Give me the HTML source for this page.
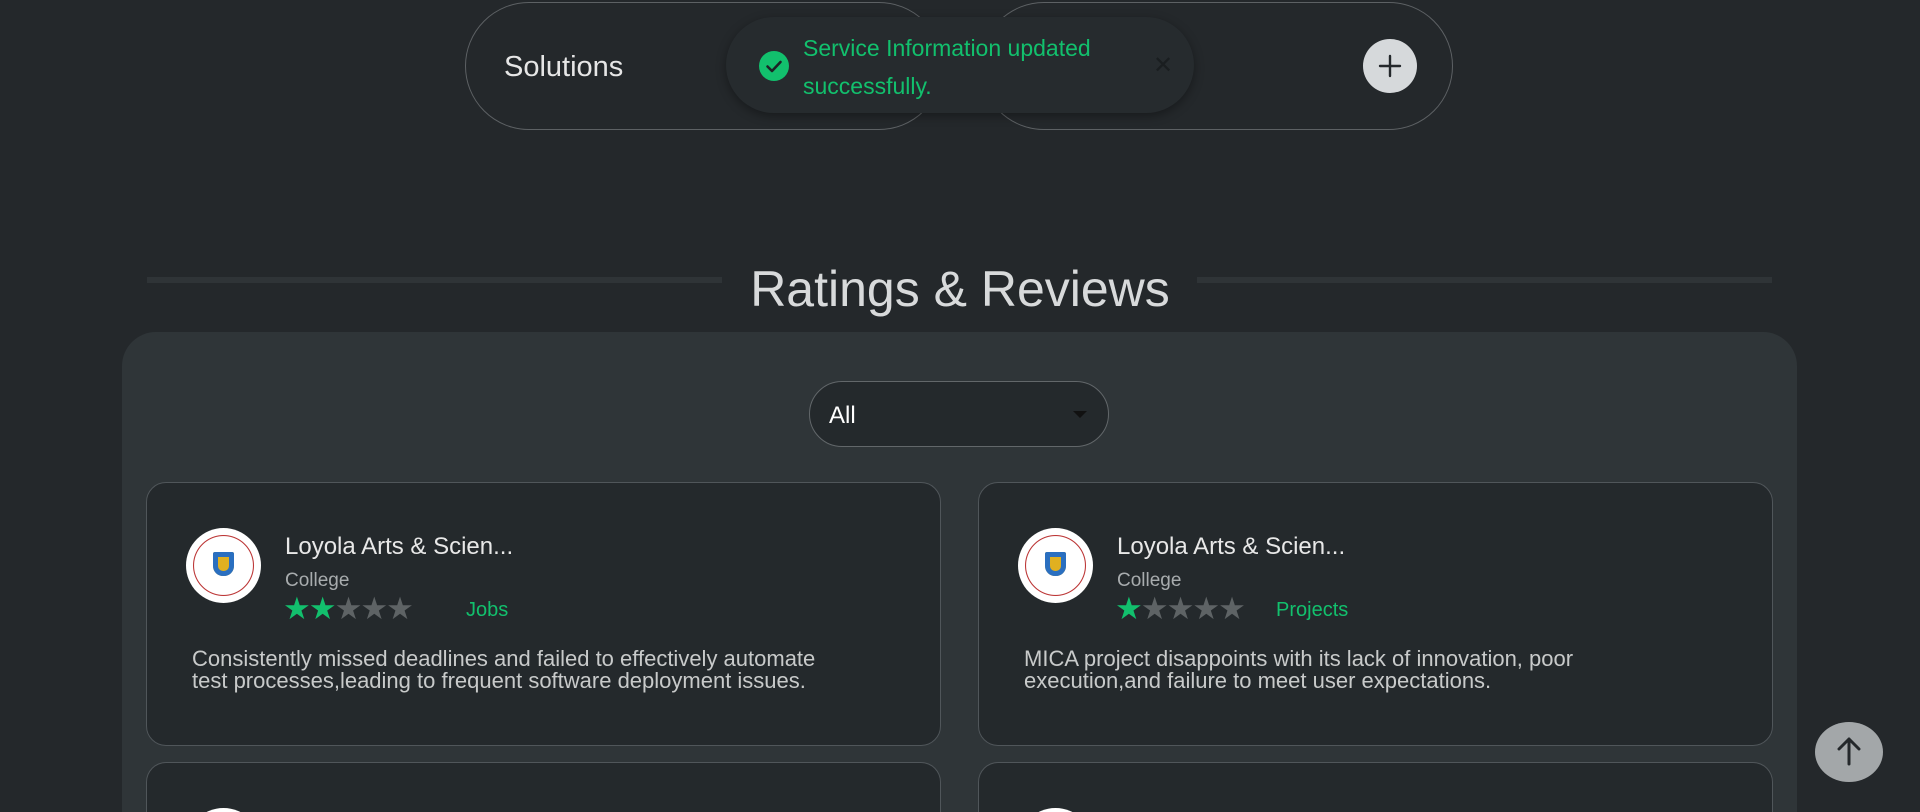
<!DOCTYPE html>
<html style="width:1920px;height:812px;overflow:hidden"><head><meta charset="utf-8"><style>
*{box-sizing:border-box;margin:0;padding:0}
body{width:1920px;height:812px;background:#24282b;font-family:"Liberation Sans",sans-serif;position:relative;overflow:hidden;color:#e6e6e6}
.abs{position:absolute}
.pill{position:absolute;top:2px;height:128px;border:1.5px solid #5d6164;border-radius:64px;background:#24282b}
.toast{position:absolute;left:726px;top:17px;width:468px;height:96px;border-radius:48px;background:#262b2e;box-shadow:0 3px 10px rgba(0,0,0,.35)}
.line{position:absolute;top:277px;height:6px;background:#2f3437}
.panel{position:absolute;left:122px;top:332px;width:1675px;height:480px;border-radius:34px 34px 0 0;background:#2f3538}
.card{position:absolute;width:795px;height:264px;border:1.5px solid #50565a;border-radius:20px;background:#24292c;overflow:hidden}
.logo{position:absolute;left:39px;top:45px;width:75px;height:75px;border-radius:50%;background:radial-gradient(circle,#fff 0 55%,#b33 56% 57%,#fff 58% 86%,#bbb 87% 100%)}
.logo:after{content:"";position:absolute;left:27px;top:24px;width:21px;height:24px;background:#e0b020;border-radius:2px 2px 10px 10px;box-shadow:inset 0 0 0 5px #2a6fc0}
.name{position:absolute;left:138px;top:50px;font-size:24px;color:#e8e8e8}
.cat{position:absolute;left:138px;top:87px;font-size:19px;color:#a8acae}
.stars{position:absolute;left:136px;top:110px;font-size:31px;letter-spacing:-2px;line-height:31px}
.g{color:#12c06d}.d{color:#5e6365}
.tag{position:absolute;top:116px;font-size:20px;color:#12c06d}
.rev{position:absolute;left:45px;top:165px;font-size:22px;line-height:22px;color:#c8caca;width:640px}
</style></head><body>
<div class="pill" style="left:465px;width:478px"><div class="abs" style="left:38px;top:48px;font-size:29px;color:#e6e6e6">Solutions</div></div>
<div class="pill" style="left:980px;width:473px"><div class="abs" style="left:382px;top:36px;width:54px;height:54px;border-radius:50%;background:#d6d9db"><svg width="54" height="54" viewBox="0 0 54 54"><path d="M27 17v20M17 27h20" stroke="#24282b" stroke-width="2.4" stroke-linecap="round"/></svg></div></div>
<div class="toast">
<svg class="abs" style="left:32px;top:33px" width="32" height="32" viewBox="0 0 32 32"><circle cx="16" cy="16" r="15" fill="#12c06d"/><path d="M9.5 16.5l4.5 4.5 8.5-9" stroke="#1c2326" stroke-width="2.6" fill="none" stroke-linecap="round" stroke-linejoin="round"/></svg>
<div class="abs" style="left:77px;top:12px;font-size:23px;line-height:38px;color:#12c06d">Service Information updated<br>successfully.</div>
<div class="abs" style="left:427px;top:34px;font-size:24px;color:#1a1e20">✕</div>
</div>
<div class="line" style="left:147px;width:575px"></div>
<div class="line" style="left:1197px;width:575px"></div>
<div class="abs" style="left:0;width:1920px;top:260px;text-align:center;font-size:50px;color:#d8dadb">Ratings &amp; Reviews</div>
<div class="panel"></div>
<div class="abs" style="left:809px;top:381px;width:300px;height:66px;border:1.5px solid #62676a;border-radius:33px;background:#24292c">
<div class="abs" style="left:19px;top:20px;font-size:24px;color:#fff">All</div>
<div class="abs" style="left:263px;top:29px;width:0;height:0;border-left:7px solid transparent;border-right:7px solid transparent;border-top:7px solid #111"></div>
</div>
<div class="card" style="left:146px;top:482px"><div class="logo"></div><div class="name">Loyola Arts &amp; Scien...</div><div class="cat">College</div><div class="stars"><span class="g">★★</span><span class="d">★★★</span></div><div class="tag" style="left:319px">Jobs</div><div class="rev">Consistently missed deadlines and failed to effectively automate test processes,leading to frequent software deployment issues.</div></div>
<div class="card" style="left:978px;top:482px"><div class="logo"></div><div class="name">Loyola Arts &amp; Scien...</div><div class="cat">College</div><div class="stars"><span class="g">★</span><span class="d">★★★★</span></div><div class="tag" style="left:297px">Projects</div><div class="rev" style="width:620px">MICA project disappoints with its lack of innovation, poor execution,and failure to meet user expectations.</div></div>
<div class="card" style="left:146px;top:762px;height:50px;border-bottom:none;border-radius:20px 20px 0 0"><div class="logo"></div></div>
<div class="card" style="left:978px;top:762px;height:50px;border-bottom:none;border-radius:20px 20px 0 0"><div class="logo"></div></div>
<div class="abs" style="left:1815px;top:722px;width:68px;height:60px;border-radius:50%;background:#a3a7a9"><svg width="68" height="60" viewBox="0 0 68 60"><path d="M34 42V17M24 27l10-10 10 10" stroke="#24282b" stroke-width="3" fill="none" stroke-linecap="round" stroke-linejoin="round"/></svg></div>
</body></html>
